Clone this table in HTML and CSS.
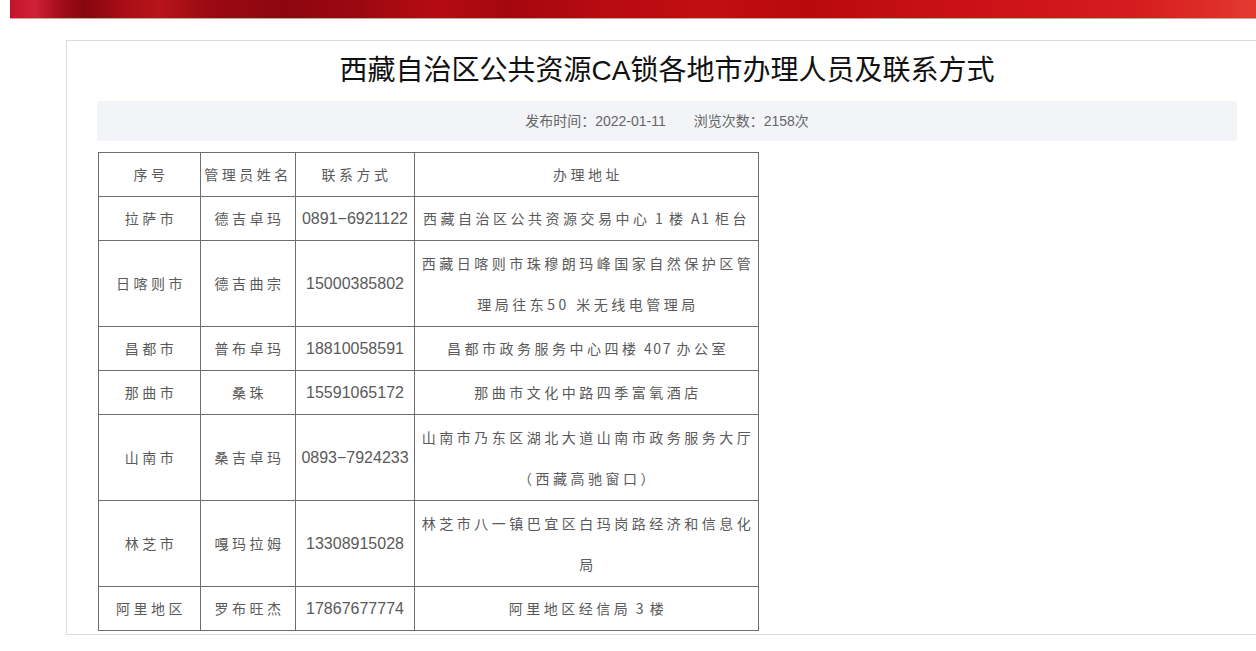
FILE: index.html
```html
<!DOCTYPE html>
<html lang="zh-CN">
<head>
<meta charset="utf-8">
<title>西藏自治区公共资源CA锁各地市办理人员及联系方式</title>
<link rel="stylesheet" href="styles.css">
</head>
<body>
<div class="banner"></div>
<div class="card">
  <h1 class="title">西藏自治区公共资源CA锁各地市办理人员及联系方式</h1>
  <div class="meta">
    <span class="meta-item">发布时间：2022-01-11</span>
    <span class="meta-item">浏览次数：2158次</span>
  </div>
  <table class="contacts">
    <colgroup>
      <col class="c1"><col class="c2"><col class="c3"><col class="c4">
    </colgroup>
    <tr class="row-s">
      <td>序号</td><td class="tight">管理员姓名</td><td>联系方式</td><td>办理地址</td>
    </tr>
    <tr class="row-s">
      <td>拉萨市</td><td>德吉卓玛</td><td class="num">0891−6921122</td><td class="nowrap">西藏自治区公共资源交易中心<span class="lat"> 1 </span>楼<span class="lat"> A1 </span>柜台</td>
    </tr>
    <tr class="row-d">
      <td>日喀则市</td><td>德吉曲宗</td><td class="num">15000385802</td><td>西藏日喀则市珠穆朗玛峰国家自然保护区管理局往东50 米无线电管理局</td>
    </tr>
    <tr class="row-s">
      <td>昌都市</td><td>普布卓玛</td><td class="num">18810058591</td><td>昌都市政务服务中心四楼<span class="lat"> 407 </span>办公室</td>
    </tr>
    <tr class="row-s">
      <td>那曲市</td><td>桑珠</td><td class="num">15591065172</td><td>那曲市文化中路四季富氧酒店</td>
    </tr>
    <tr class="row-d">
      <td>山南市</td><td>桑吉卓玛</td><td class="num">0893−7924233</td><td>山南市乃东区湖北大道山南市政务服务大厅（西藏高驰窗口）</td>
    </tr>
    <tr class="row-d">
      <td>林芝市</td><td>嘎玛拉姆</td><td class="num">13308915028</td><td>林芝市八一镇巴宜区白玛岗路经济和信息化局</td>
    </tr>
    <tr class="row-s">
      <td>阿里地区</td><td>罗布旺杰</td><td class="num">17867677774</td><td>阿里地区经信局<span class="lat"> 3 </span>楼</td>
    </tr>
  </table>
</div>
</body>
</html>
```

FILE: styles.css
```css
html, body {
  margin: 0;
  padding: 0;
  overflow: hidden;
  background: #fff;
}

body {
  font-family: "Liberation Sans", "Noto Sans CJK SC", sans-serif;
  color: #333;
}

.banner {
  margin-left: 10px;
  height: 18px;
  border-bottom: 1px solid #b9a9a9;
  background: linear-gradient(90deg,
    #c4142a 0%,
    #d0203a 2%,
    #a50d1a 4%,
    #86060f 6%,
    #a80d16 9%,
    #b8141b 12%,
    #9a0a12 16%,
    #8e0510 22%,
    #9c0810 28%,
    #b50b12 34%,
    #a5070f 40%,
    #b80a11 48%,
    #c20d14 56%,
    #b9090f 64%,
    #c50e16 72%,
    #d01419 82%,
    #d41c1e 90%,
    #de2c28 96%,
    #e33a30 100%);
}

.card {
  margin: 21px 0 0 66px;
  width: 1140px;
  border: 1px solid #dcdcdc;
  border-right: none;
  padding: 10px 19px 1px 30px;
  height: 582px;
  overflow: hidden;
}

.title {
  margin: 0;
  font-size: 28px;
  font-weight: normal;
  line-height: 40px;
  text-align: center;
  color: #111;
}

.meta {
  margin-top: 10px;
  height: 40px;
  line-height: 40px;
  background: #f3f4f8;
  border-radius: 2px;
  text-align: center;
  font-size: 14px;
  color: #666;
}

.meta-item + .meta-item {
  margin-left: 24px;
}

.contacts {
  margin: 11px 0 0 1px;
  border-collapse: collapse;
  table-layout: fixed;
  width: 661px;
  font-family: "Noto Sans CJK SC", sans-serif;
  font-size: 14px;
  letter-spacing: 3.5px;
  color: #5a5a5a;
}

.c1 { width: 102px; }
.c2 { width: 95px; }
.c3 { width: 119px; }
.c4 { width: 344px; }

.contacts td {
  border: 1px solid #6e6e6e;
  padding: 0 3px 0 6px;
  text-align: center;
  vertical-align: middle;
  line-height: 41px;
}

.row-s { height: 44px; }
.row-d { height: 86px; }

.contacts td.tight {
  padding: 0;
  white-space: nowrap;
}

.contacts td.num {
  font-family: "Liberation Sans", sans-serif;
  font-size: 16px;
  letter-spacing: 0;
  padding: 0;
}

.contacts td.nowrap {
  white-space: nowrap;
  padding: 0;
}

.lat {
  letter-spacing: 1.5px;
}
```
